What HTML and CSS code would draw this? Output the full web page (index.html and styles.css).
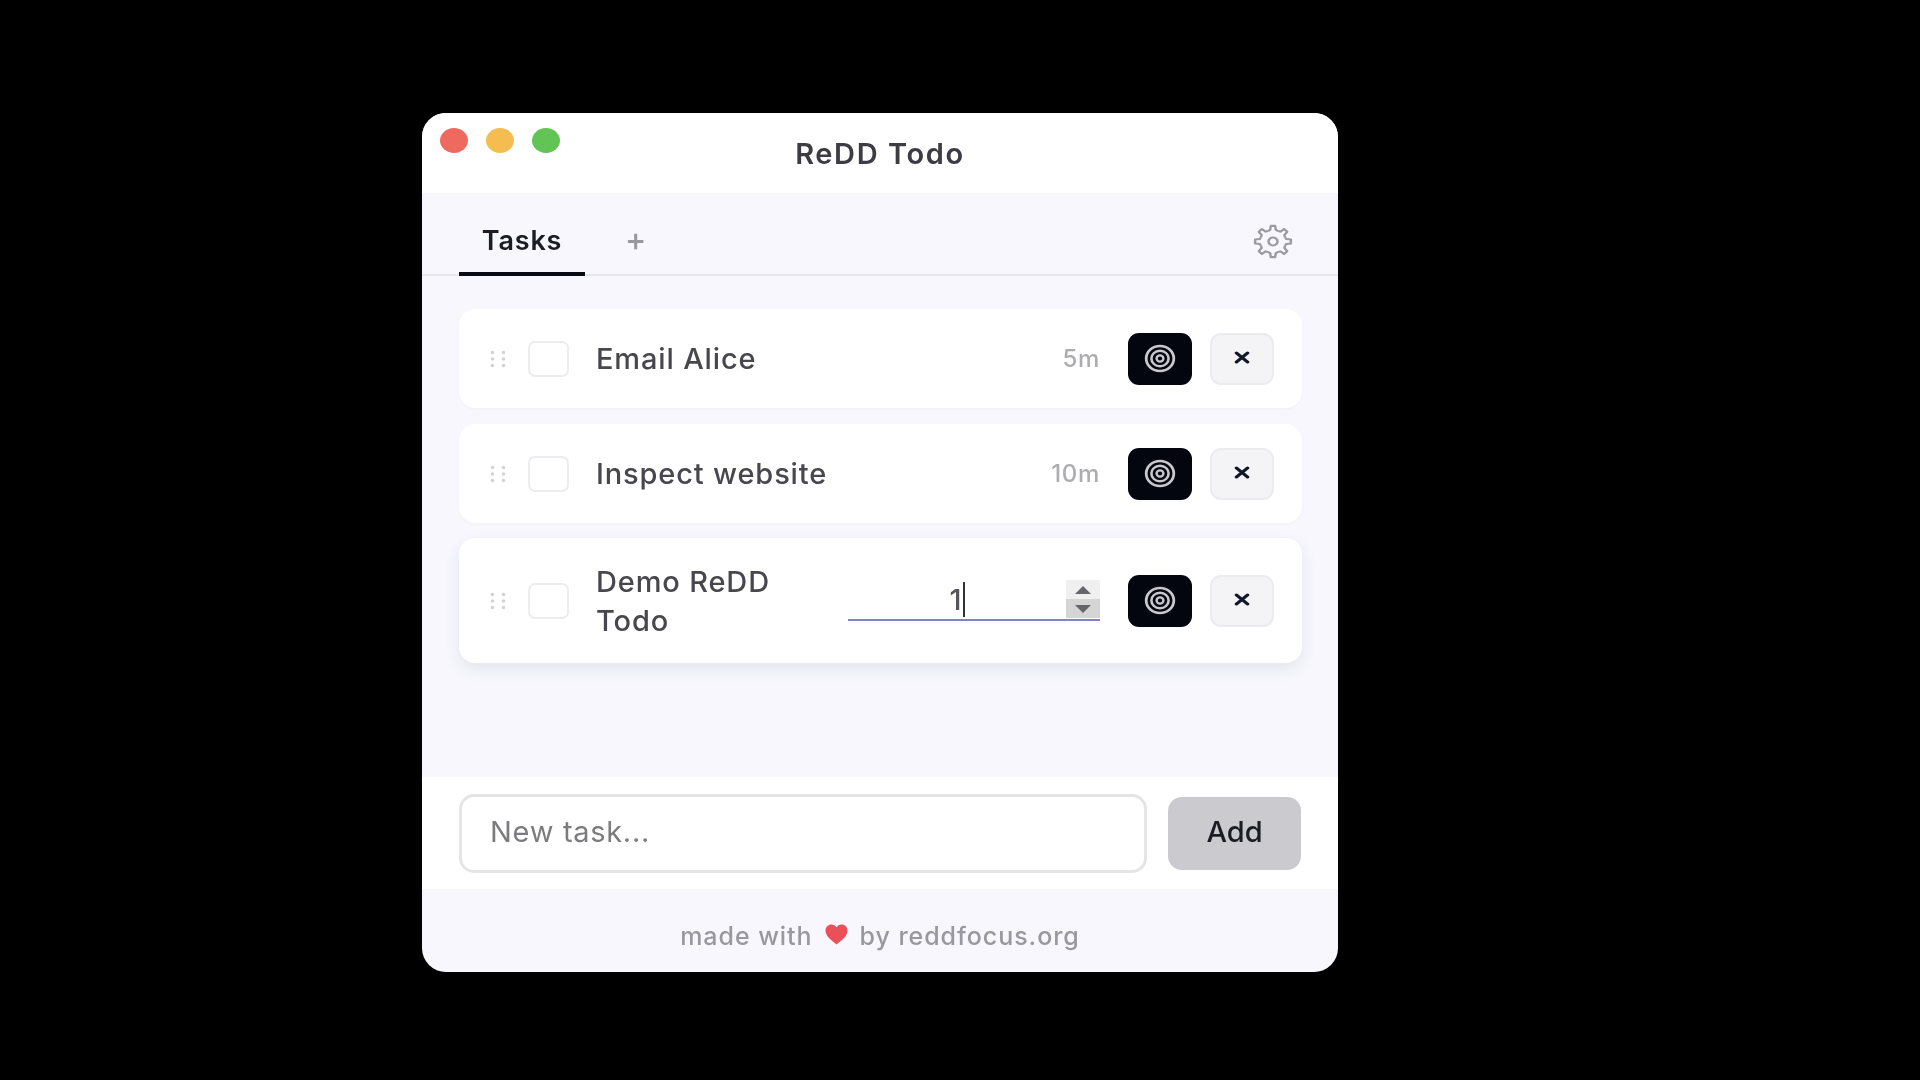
FILE: index.html
```html
<!DOCTYPE html>
<html lang="en">
<head>
<meta charset="utf-8">
<title>ReDD Todo</title>
<link rel="stylesheet" href="styles.css">
</head>
<body>
<svg class="defs" width="0" height="0" aria-hidden="true">
  <symbol id="target" viewBox="0 0 32 32" preserveAspectRatio="none">
    <circle cx="16" cy="16" r="13.800" fill="none" stroke="#c8c8ce" stroke-width="2.800"/>
    <circle cx="16" cy="16" r="8.600" fill="none" stroke="#c8c8ce" stroke-width="2.600"/>
    <circle cx="16" cy="16" r="3.400" fill="none" stroke="#c8c8ce" stroke-width="2.400"/>
  </symbol>
  <symbol id="close" viewBox="0 0 16 16" preserveAspectRatio="none">
    <path d="M2.500 2.500 13.500 13.500M13.500 2.500 2.500 13.500" fill="none" stroke="#111827" stroke-width="3.600" stroke-linecap="round"/>
  </symbol>
  <symbol id="grip" viewBox="0 0 16 18">
    <g fill="#d2d2d8">
      <circle cx="2.500" cy="2.500" r="1.800"/><circle cx="13.500" cy="2.500" r="1.800"/>
      <circle cx="2.500" cy="9" r="1.800"/><circle cx="13.500" cy="9" r="1.800"/>
      <circle cx="2.500" cy="15.500" r="1.800"/><circle cx="13.500" cy="15.500" r="1.800"/>
    </g>
  </symbol>
</svg>
<main class="window">
  <header class="titlebar">
    <div class="lights">
      <span class="light red"></span>
      <span class="light yellow"></span>
      <span class="light green"></span>
    </div>
    <h1 class="title">ReDD Todo</h1>
  </header>
  <nav class="tabs">
    <div class="tab active">Tasks</div>
    <div class="tab-add">+</div>
    <svg class="gear" viewBox="-20 -20 40 40" preserveAspectRatio="none" fill="none" stroke="#9a9aa0" stroke-width="2.400" stroke-linejoin="round">
      <defs><path id="tooth" d="M-4.970-12.010-2.810-13.200-2.190-17.870 2.190-17.870 2.810-13.200 4.970-12.010"/></defs>
      <use href="#tooth"/>
      <use href="#tooth" transform="rotate(45)"/>
      <use href="#tooth" transform="rotate(90)"/>
      <use href="#tooth" transform="rotate(135)"/>
      <use href="#tooth" transform="rotate(180)"/>
      <use href="#tooth" transform="rotate(225)"/>
      <use href="#tooth" transform="rotate(270)"/>
      <use href="#tooth" transform="rotate(315)"/>
      <circle cx="0" cy="0" r="4.500"/>
    </svg>
  </nav>
  <section class="list">
    <article class="card">
      <svg class="grip"><use href="#grip"/></svg>
      <span class="check"></span>
      <span class="name">Email Alice</span>
      <span class="time">5m</span>
      <button class="btn-focus"><svg class="icon-target"><use href="#target"/></svg></button>
      <button class="btn-close"><svg class="icon-close"><use href="#close"/></svg></button>
    </article>
    <article class="card">
      <svg class="grip"><use href="#grip"/></svg>
      <span class="check"></span>
      <span class="name">Inspect website</span>
      <span class="time">10m</span>
      <button class="btn-focus"><svg class="icon-target"><use href="#target"/></svg></button>
      <button class="btn-close"><svg class="icon-close"><use href="#close"/></svg></button>
    </article>
    <article class="card card-editing">
      <svg class="grip"><use href="#grip"/></svg>
      <span class="check"></span>
      <span class="name name-wrap">Demo ReDD Todo</span>
      <div class="time-edit">
        <div class="time-value"><span class="digit">1</span><span class="caret"></span></div>
        <div class="spinner">
          <span class="spin spin-up"><i class="arrow-up"></i></span>
          <span class="spin spin-down"><i class="arrow-down"></i></span>
        </div>
      </div>
      <button class="btn-focus"><svg class="icon-target"><use href="#target"/></svg></button>
      <button class="btn-close"><svg class="icon-close"><use href="#close"/></svg></button>
    </article>
  </section>
  <form class="composer">
    <div class="new-task">New task...</div>
    <div class="add">Add</div>
  </form>
  <footer class="footer">
    <span>made with</span>
    <svg class="heart" viewBox="0 0 24 22"><path d="M12 21.500C5 16 .5 12 .5 6.800.5 3 3.400.5 6.600.5 8.800.5 10.900 1.600 12 3.500 13.100 1.600 15.200.5 17.400.5 20.600.5 23.500 3 23.500 6.800 23.500 12 19 16 12 21.500Z" fill="#ea4f5a"/></svg>
    <span>by reddfocus.org</span>
  </footer>
</main>
</body>
</html>
```
FILE: styles.css
```css
* { box-sizing: border-box; }
html, body { margin: 0; height: 100%; }
body {
  background: #000;
  font-family: Inter, "Liberation Sans", sans-serif;
  padding: 113px 0 0 422px;
}
.defs { position: absolute; }
.window {
  width: 916px;
  height: 859px;
  border-radius: 24px;
  overflow: hidden;
  background: #f7f7fd;
  display: flex;
  flex-direction: column;
  filter: blur(0.6px);
}
.titlebar {
  height: 80px;
  flex: none;
  background: #fff;
  padding: 15px 0 0 18px;
  position: relative;
}
.lights { display: flex; gap: 18px; }
.light { width: 28px; height: 25px; border-radius: 50%; }
.red { background: #ee6a5f; }
.yellow { background: #f5bd4f; }
.green { background: #61c454; }
.title {
  position: absolute;
  left: 0;
  right: 0;
  top: 25px;
  margin: 0;
  text-align: center;
  font-size: 29px;
  line-height: 32px;
  letter-spacing: 1.600px;
  font-weight: 600;
  color: #3c3c42;
}
.tabs {
  height: 83px;
  flex: none;
  display: flex;
  align-items: flex-start;
  padding: 0 37px;
  border-bottom: 2px solid #e6e6ec;
}
.tab {
  width: 126px;
  height: 83px;
  padding-top: 30px;
  text-align: center;
  font-size: 27px;
  line-height: 36px;
  letter-spacing: .800px;
  font-weight: 600;
  color: #1c1c24;
  border-bottom: 4px solid #0b0b14;
}
.tab-add {
  margin: 27px 0 0 40px;
  font-size: 32px;
  line-height: 40px;
  font-weight: 500;
  color: #98989e;
}
.gear { width: 40px; height: 35px; margin: 31px 8px 0 auto; }
.list {
  flex: 1;
  padding: 33px 36px 0 37px;
  display: flex;
  flex-direction: column;
  gap: 16px;
}
.card {
  height: 99px;
  flex: none;
  display: flex;
  align-items: center;
  background: #fff;
  border-radius: 16px;
  padding: 0 28px 0 31px;
  box-shadow: 0 1px 3px rgba(40, 40, 80, .03);
}
.card-editing {
  height: 125px;
  margin-top: -1px;
  box-shadow: 0 6px 16px rgba(40, 40, 80, .09);
}
.grip { width: 16px; height: 18px; flex: none; }
.check {
  width: 41px;
  height: 36px;
  flex: none;
  margin-left: 22px;
  border: 2.500px solid #ececf1;
  border-radius: 7px;
  background: #fff;
}
.name {
  flex: 1;
  margin-left: 27px;
  font-size: 29px;
  line-height: 39px;
  letter-spacing: .850px;
  font-weight: 500;
  color: #47474d;
}
.name-wrap { flex: none; width: 220px; }
.time {
  font-size: 24px;
  letter-spacing: .700px;
  font-weight: 500;
  color: #acacb1;
  margin-right: 28px;
}
.btn-focus, .btn-close {
  height: 52px;
  flex: none;
  padding: 0;
  display: flex;
  align-items: center;
  justify-content: center;
  border-radius: 11px;
}
.btn-focus { width: 64px; background: #03050f; border: none; }
.btn-close { width: 64px; margin-left: 18px; background: #f4f4f6; border: 2px solid #ebebf0; }
.icon-target { width: 32px; height: 29px; }
.icon-close { width: 16px; height: 13px; margin-bottom: 2px; }
.time-edit {
  width: 252px;
  margin: 0 28px 0 auto;
  height: 41px;
  display: flex;
  border-bottom: 2px solid #7f84c4;
}
.time-value {
  flex: 1;
  display: flex;
  justify-content: center;
  align-items: flex-end;
  font-size: 29px;
  line-height: 39px;
  font-weight: 500;
  color: #55555b;
}
.caret { width: 2px; height: 35px; background: #333; margin: 0 0 2px 1px; }
.spinner { width: 34px; display: flex; flex-direction: column; }
.spin { height: 19px; display: flex; align-items: center; justify-content: center; }
.spin-up { background: #f0f0f1; }
.spin-down { background: #d5d5d6; }
.arrow-up, .arrow-down { width: 0; height: 0; border-left: 8px solid transparent; border-right: 8px solid transparent; }
.arrow-up { border-bottom: 8px solid #66666a; }
.arrow-down { border-top: 8px solid #66666a; }
.composer {
  height: 112px;
  flex: none;
  background: #fff;
  display: flex;
  align-items: center;
  padding: 0 37px 0 37px;
  gap: 21px;
}
.new-task {
  flex: 1;
  height: 79px;
  border: 3px solid #e5e5e7;
  border-radius: 15px;
  padding: 0 0 3px 28px;
  display: flex;
  align-items: center;
  font-size: 29px;
  letter-spacing: .700px;
  color: #7c7c7f;
}
.add {
  width: 133px;
  height: 73px;
  border-radius: 14px;
  padding-bottom: 3px;
  background: #cbcbcf;
  display: flex;
  align-items: center;
  justify-content: center;
  font-size: 29px;
  font-weight: 500;
  color: #1c1c24;
}
.footer {
  height: 83px;
  flex: none;
  display: flex;
  align-items: center;
  justify-content: center;
  gap: 11px;
  font-size: 25px;
  font-weight: 500;
  letter-spacing: .950px;
  color: #98989e;
  padding-top: 10px;
}
.heart { width: 25px; height: 21px; margin-top: -2px; }
```
